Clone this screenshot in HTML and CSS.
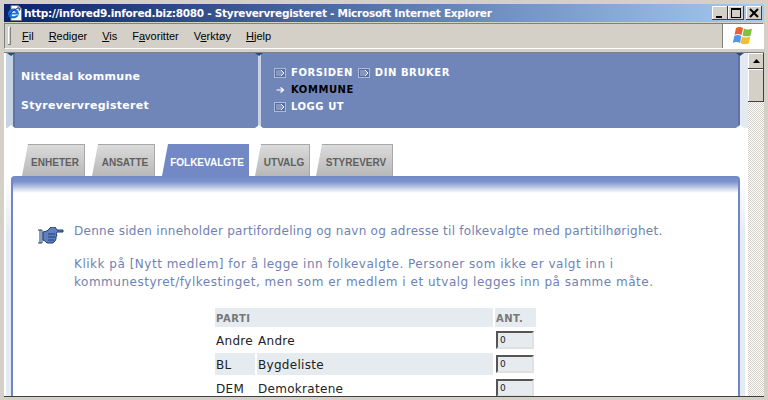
FILE: index.html
```html
<!DOCTYPE html>
<html lang="no">
<head>
    <meta charset="UTF-8">
    <title>Styrevervregisteret</title>
    <link rel="stylesheet" href="styles.css">
</head>
<body>
<div class="window">

    <!-- Tittellinje -->
    <div class="titlebar">
        <svg class="ie-icon" width="16" height="16" viewBox="0 0 16 16">
            <path d="M4 .5h7l3.500 3.500v11.500H4z" fill="#fff" stroke="#7a7a7a"/>
            <path d="M11 .5v3.500h3.500" fill="#dfe6f2" stroke="#7a7a7a"/>
            <path d="M1 9c0-3 2.500-5.500 5.500-5.500S12 6 12 9.500H4.500c.2 2 3 2.600 4.500 .8h2.700C10 14.500 1 14.800 1 9z" fill="#1c6fd6"/>
            <path d="M4.500 7.800h4.300C8.500 5.800 4.900 5.800 4.500 7.800z" fill="#fff"/>
            <path d="M0 14c1-4 6-9 11-11 2-.8 2 1.500 1 3" fill="none" stroke="#0c3f9c"/>
        </svg>
        <span class="title-text">http://infored9.infored.biz:8080 - Styrevervregisteret - Microsoft Internet Explorer</span>
        <div class="win-buttons">
            <div class="win-btn"><svg width="16" height="14" viewBox="0 0 16 14"><path d="M4 10h6v2H4z"/></svg></div>
            <div class="win-btn"><svg width="16" height="14" viewBox="0 0 16 14"><path d="M3 2h10v10H3zM4 4v7h8V4z" fill-rule="evenodd"/></svg></div>
            <div class="win-btn win-close"><svg width="16" height="14" viewBox="0 0 16 14"><path d="M4 3l8 8M12 3l-8 8" stroke="#000" stroke-width="2"/></svg></div>
        </div>
    </div>

    <!-- Meny -->
    <div class="menubar">
        <div class="menu-items">
            <div class="grip"></div>
            <span><u>F</u>il</span>
            <span><u>R</u>ediger</span>
            <span><u>V</u>is</span>
            <span>F<u>a</u>voritter</span>
            <span>V<u>e</u>rktøy</span>
            <span><u>H</u>jelp</span>
        </div>
        <div class="logo-box">
            <svg width="22" height="20" viewBox="0 0 22 20">
                <path d="M4 2c2-1.500 4.500-1.500 7 0l-1.500 7C7 7.800 4.500 7.800 2.500 9z" fill="#e8632a"/>
                <path d="M12 2.500c2 1.300 5 1.300 8 .2l-1.500 7c-2.800 1-5.800 .8-8-.3z" fill="#86bf3c"/>
                <path d="M2.300 10c2-1.300 4.500-1.300 7 0L8 17c-2.500-1.400-5-1.400-7.200 0z" fill="#4f98e6"/>
                <path d="M10 10.500c2.300 1.200 5 1.200 8.200 0l-1.500 7c-3 1.200-5.800 1-8.200-.2z" fill="#f2bf2e"/>
            </svg>
        </div>
    </div>

    <div class="view">
        <div class="page">

            <!-- Topp -->
            <div class="header">
                <div class="header-left">
                    <div>Nittedal kommune</div>
                    <div>Styrevervregisteret</div>
                </div>
                <div class="header-right">
                    <i class="notch notch-left"></i>
                    <i class="notch notch-right"></i>
                    <div class="nav-row">
                        <a class="nav-link">
                            <svg class="nav-box" width="12" height="10" viewBox="0 0 12 10"><path d="M0 0h12v10H0z" fill="#aebbd8"/><path d="M1 1h10v8H1z" fill="#5a6e9f"/><path d="M2 2h5l3 3-3 3H2z" fill="#8496c4"/><path d="M7 2l3 3-3 3" fill="none" stroke="#fff"/></svg>FORSIDEN
                        </a>
                        <a class="nav-link">
                            <svg class="nav-box" width="12" height="10" viewBox="0 0 12 10"><path d="M0 0h12v10H0z" fill="#aebbd8"/><path d="M1 1h10v8H1z" fill="#5a6e9f"/><path d="M2 2h5l3 3-3 3H2z" fill="#8496c4"/><path d="M7 2l3 3-3 3" fill="none" stroke="#fff"/></svg>DIN BRUKER
                        </a>
                    </div>
                    <div class="nav-row">
                        <a class="nav-link nav-active">
                            <svg class="nav-box" width="12" height="10" viewBox="0 0 12 10"><path d="M2.500 5h6.500M6.500 2.500L9.500 5l-3 2.500" fill="none" stroke="#fff" stroke-width="1.200"/></svg>KOMMUNE
                        </a>
                    </div>
                    <div class="nav-row">
                        <a class="nav-link">
                            <svg class="nav-box" width="12" height="10" viewBox="0 0 12 10"><path d="M0 0h12v10H0z" fill="#aebbd8"/><path d="M1 1h10v8H1z" fill="#5a6e9f"/><path d="M2 2h5l3 3-3 3H2z" fill="#8496c4"/><path d="M7 2l3 3-3 3" fill="none" stroke="#fff"/></svg>LOGG UT
                        </a>
                    </div>
                </div>
            </div>

            <!-- Faner -->
            <div class="tabs">
                <div class="tab tab-1">ENHETER</div>
                <div class="tab tab-2">ANSATTE</div>
                <div class="tab tab-3 active">FOLKEVALGTE</div>
                <div class="tab tab-4">UTVALG</div>
                <div class="tab tab-5">STYREVERV</div>
            </div>

            <div class="panel">
                <div class="panel-inner">
                    <div class="intro">
                        <svg class="hand" width="26" height="18" viewBox="0 0 26 18">
                            <path d="M0 3h4M0 16h4M2 3v13M4 3v13" fill="none" stroke="#1d3f74"/>
                            <path d="M5 5l4-1 4-4h4l2 3h6v2h-6l-1 2 1 1-1 2 0 2-1 2-2 2H9l-2-2-2-1z" fill="#5f7fc0" stroke="#1d3f74"/>
                            <path d="M10 7h7M10 10h7M10 13h6" stroke="#1d3f74" fill="none"/>
                        </svg>
                        <div class="intro-text">
                            <p>Denne siden inneholder partifordeling og navn og adresse til folkevalgte med partitilhørighet.</p>
                            <p class="intro-wide">Klikk på [Nytt medlem] for å legge inn folkevalgte. Personer som ikke er valgt inn i<br>kommunestyret/fylkestinget, men som er medlem i et utvalg legges inn på samme måte.</p>
                        </div>
                    </div>

                    <table class="party-table">
                        <tr>
                            <th colspan="2">PARTI</th>
                            <th class="ant">ANT.</th>
                        </tr>
                        <tr>
                            <td class="code">Andre</td>
                            <td class="name">Andre</td>
                            <td class="ant"><input type="text" value="0"></td>
                        </tr>
                        <tr class="shade">
                            <td class="code">BL</td>
                            <td class="name">Bygdeliste</td>
                            <td class="ant"><input type="text" value="0"></td>
                        </tr>
                        <tr>
                            <td class="code">DEM</td>
                            <td class="name">Demokratene</td>
                            <td class="ant"><input type="text" value="0"></td>
                        </tr>
                    </table>
                </div>
            </div>
        </div>

        <!-- Rullefelt -->
        <div class="scrollbar">
            <div class="scroll-btn"><svg width="7" height="4" viewBox="0 0 7 4"><path d="M3.500 0L7 4H0z"/></svg></div>
            <div class="scroll-thumb"></div>
            <div class="scroll-track"></div>
        </div>
    </div>
</div>
</body>
</html>
```

FILE: styles.css
```css
body {
    margin: 0;
    overflow: hidden;
}

.window {
    width: 768px;
    height: 400px;
    box-sizing: border-box;
    padding: 4px 4px 3px;
    background-color: #d4d0c8;
    display: flex;
    flex-direction: column;
    overflow: hidden;
}

/* Tittellinje */
.titlebar {
    height: 18px;
    flex: none;
    display: flex;
    align-items: center;
    background: linear-gradient(90deg, #0a246a 0%, #a6caf0 100%);
    color: #fff;
    font-family: "DejaVu Sans", sans-serif;
    font-weight: bold;
    font-size: 10.500px;
    letter-spacing: -0.260px;
    overflow: hidden;
}

.ie-icon {
    margin: 0 1px 0 3px;
    flex: none;
}

.title-text {
    flex: 1;
    white-space: nowrap;
}

.win-buttons {
    display: flex;
    margin-right: 2px;
}

.win-btn {
    width: 16px;
    height: 14px;
    background-color: #d4d0c8;
    box-shadow: inset -1px -1px 0 #404040, inset 1px 1px 0 #fff;
}

.win-btn svg {
    display: block;
}

.win-close {
    margin-left: 2px;
}

/* Meny */
.menubar {
    height: 26px;
    flex: none;
    margin-top: 1px;
    display: flex;
    justify-content: space-between;
    box-sizing: border-box;
    border: 1px solid;
    border-color: #808080 #fff #fff #808080;
    font-family: "Liberation Sans", sans-serif;
    font-size: 11px;
    color: #000;
}

.menu-items {
    display: flex;
    align-items: center;
    gap: 15px;
}

.grip {
    width: 3px;
    height: 18px;
    margin-left: 3px;
    margin-right: -4px;
    background-color: #d4d0c8;
    box-shadow: inset -1px -1px 0 #808080, inset 1px 1px 0 #fff;
}

.logo-box {
    width: 40px;
    background-color: #fff;
    border-left: 1px solid #808080;
    display: flex;
    align-items: center;
    justify-content: center;
}

/* Innhold */
.view {
    flex: 1;
    min-height: 0;
    margin-top: 3px;
    display: flex;
    border-top: 1px solid #808080;
    border-bottom: 1px solid #404040;
    background-color: #fff;
}

.page {
    flex: 1;
    min-width: 0;
    overflow: hidden;
    padding-left: 2px;
}

.header {
    height: 75px;
    display: flex;
    color: #fff;
    font-family: "DejaVu Sans", sans-serif;
    font-weight: bold;
    background: linear-gradient(90deg, #c5d3e2, #e3eaf2);
}

.header-left,
.header-right {
    position: relative;
    background-color: #7086b8;
    box-sizing: border-box;
}

.header-left {
    width: 245px;
    margin-left: 7px;
    padding: 17px 0 0 6px;
    font-size: 11px;
    letter-spacing: 0.300px;
    display: flex;
    flex-direction: column;
    gap: 15px;
    border-left: 2px solid #5f74a6;
    line-height: 14px;
}

.header-left::before,
.header-right::before,
.header-right::after {
    content: "";
    position: absolute;
    top: 0;
    border-style: solid;
    border-color: #1d4f7c transparent transparent;
    border-width: 3px 4px 0;
}

.header-left::before {
    left: -8px;
}

.header-right::before {
    left: -6px;
}

.header-right::after {
    right: -6px;
}

.header-left::after,
.notch {
    position: absolute;
    bottom: 0;
    border-style: solid;
    border-color: transparent transparent #fff;
    border-width: 0 4px 3px;
}

.header-left::after {
    content: "";
    left: -8px;
}

.notch-left {
    left: -6px;
}

.notch-right {
    right: -6px;
}

.header-right {
    flex: 1;
    margin-right: 8px;
    padding: 11px 0 0 13px;
    font-size: 10px;
    letter-spacing: 0.550px;
    border-left: 3px solid #c5d3e2;
    border-right: 2px solid #5f74a6;
}

.nav-row {
    display: flex;
    gap: 5px;
    height: 17px;
    align-items: center;
}

.nav-link {
    display: flex;
    align-items: center;
}

.nav-active {
    color: #000;
}

.nav-box {
    margin-right: 5px;
    flex: none;
}

/* Faner */
.tabs {
    height: 33px;
    margin-top: 15px;
    padding-left: 16px;
    box-sizing: border-box;
    display: flex;
    gap: 7px;
    align-items: flex-end;
    font-family: "Liberation Sans", sans-serif;
    font-size: 10px;
    font-weight: bold;
}

.tab {
    height: 32px;
    box-sizing: border-box;
    padding: 12px 0 0 3px;
    text-align: center;
    line-height: 14px;
    color: #5f5f5f;
    background: linear-gradient(#dcdcdc, #b8b8b8);
    clip-path: polygon(6px 0, 100% 0, 100% 100%, 0 100%);
    box-shadow: inset -1px 1px 0 #a8a8a8;
}

.tab-1 { width: 63px; }
.tab-2 { width: 63px; }
.tab-3 { width: 87px; margin-right: -1px; }
.tab-4 { width: 55px; }
.tab-5 { width: 77px; margin-left: -1px; }

.tab.active {
    color: #fff;
    background: #7289c6;
    box-shadow: none;
}

.panel {
    height: 221px;
    margin-right: 3px;
    padding: 0 5px;
    background: linear-gradient(#fff, #e4ebf2 60px);
}

.panel-inner {
    height: 100%;
    box-sizing: border-box;
    border-left: 2px solid #6f87c2;
    border-right: 2px solid #6f87c2;
    border-radius: 4px 4px 0 0;
    padding-top: 46px;
    background: linear-gradient(#7088c6 0, #7f95cd 6px, #fff 17px);
    overflow: hidden;
}

.intro {
    display: flex;
    align-items: flex-start;
    font-family: "DejaVu Sans", sans-serif;
    font-size: 12px;
    color: #6f82b3;
    line-height: 18px;
}

.hand {
    flex: none;
    margin: 5px 10px 0 25px;
}

.intro-text {
    letter-spacing: 0.270px;
    white-space: nowrap;
}

.intro-text p {
    margin: 0 0 15px;
}

.intro-text .intro-wide {
    letter-spacing: 0.510px;
}

.party-table {
    border-collapse: separate;
    border-spacing: 2px;
    margin-left: 200px;
    font-family: "DejaVu Sans", sans-serif;
    font-size: 12px;
    letter-spacing: 0.300px;
    color: #222;
}

.party-table th {
    height: 19px;
    padding: 1px 0 0 1px;
    box-sizing: border-box;
    text-align: left;
    font-size: 10px;
    letter-spacing: 0.500px;
    color: #777;
    background-color: #e6ebf0;
}

.party-table td {
    height: 22px;
    box-sizing: border-box;
    padding: 2px 0 0 1px;
}

.code { width: 40px; }
.name { width: 236px; }
.party-table th.ant { width: 41px; }
.party-table td.ant { width: 41px; padding-top: 0; }

.shade .code,
.shade .name {
    background-color: #e6ebf0;
}

.ant input {
    display: block;
    width: 38px;
    height: 18px;
    box-sizing: border-box;
    margin: 0;
    padding: 0 0 0 2px;
    border: 2px solid;
    border-color: #555 #e0e0e0 #e0e0e0 #555;
    background-color: #e6ebf0;
    font-family: "DejaVu Sans", sans-serif;
    font-size: 9px;
    color: #222;
    outline: none;
}

/* Rullefelt */
.scrollbar {
    width: 16px;
    flex: none;
    display: flex;
    flex-direction: column;
}

.scroll-btn {
    height: 16px;
    flex: none;
    background-color: #d4d0c8;
    box-shadow: inset -1px -1px 0 #404040, inset 1px 1px 0 #fff;
    display: flex;
    align-items: center;
    justify-content: center;
}

.scroll-thumb {
    height: 33px;
    flex: none;
    background-color: #d4d0c8;
    box-shadow: inset -1px -1px 0 #404040, inset 1px 1px 0 #fff;
}

.scroll-track {
    flex: 1;
    background: repeating-conic-gradient(#fff 0 25%, #d4d0c8 0 50%) 0 0 / 2px 2px;
}
```
